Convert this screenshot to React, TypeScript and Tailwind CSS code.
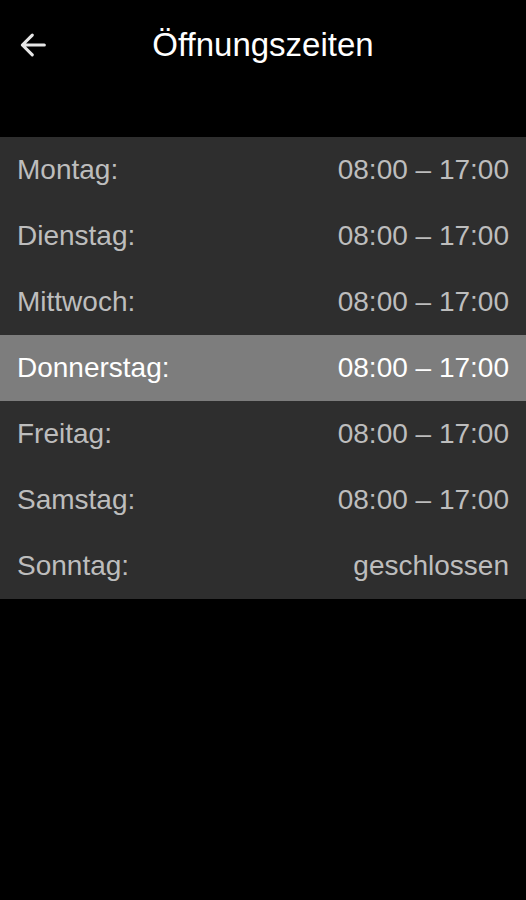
const hours = [
  { day: "Montag:", time: "08:00 – 17:00" },
  { day: "Dienstag:", time: "08:00 – 17:00" },
  { day: "Mittwoch:", time: "08:00 – 17:00" },
  { day: "Donnerstag:", time: "08:00 – 17:00", today: true },
  { day: "Freitag:", time: "08:00 – 17:00" },
  { day: "Samstag:", time: "08:00 – 17:00" },
  { day: "Sonntag:", time: "geschlossen" },
]

export default function App() {
  return (
    <div className="min-h-[900px] w-full bg-black" style={{ fontFamily: "'Liberation Sans', Arial, sans-serif" }}>
      <div className="relative flex h-[89px] items-center justify-center">
        <button className="absolute left-[16px] top-[28px] p-0 text-[#e6e6e6]">
          <svg width="34" height="34" viewBox="0 0 24 24" fill="none" stroke="currentColor" strokeWidth="2.2" strokeLinecap="round" strokeLinejoin="round">
            <path d="M20 12H4.5M11.5 5 4.5 12l7 7" />
          </svg>
        </button>
        <h1 className="text-[33px] font-normal text-white">Öffnungszeiten</h1>
      </div>

      <div className="mt-[48px] bg-[#2e2e2e]">
        {hours.map(h => (
          <div
            key={h.day}
            className={`flex h-[66px] items-center justify-between px-[17px] text-[28px] ${h.today ? "bg-[#7d7d7d] text-white" : "text-[#bdbdbd]"}`}
          >
            <span>{h.day}</span>
            <span>{h.time}</span>
          </div>
        ))}
      </div>
    </div>
  )
}
